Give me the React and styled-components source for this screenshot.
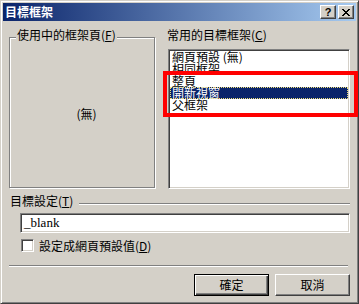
import React from 'react'
import styled, { createGlobalStyle } from 'styled-components'

const cjk = `"Noto Sans CJK TC", "Liberation Sans", sans-serif`

const GlobalStyle = createGlobalStyle`
  html, body {
    margin: 0;
    padding: 0;
    background: #d4d0c8;
  }
  * {
    box-sizing: border-box;
  }
`

const Window = styled.div`
  position: relative;
  width: 359px;
  height: 304px;
  padding: 2px;
  background: #d4d0c8;
  border: 1px solid;
  border-color: #d4d0c8 #404040 #404040 #d4d0c8;
  box-shadow: inset 1px 1px 0 #ffffff, inset -1px -1px 0 #808080;
  font-family: ${cjk};
  font-size: 12px;
  line-height: 12px;
  color: #000;
  display: flex;
  flex-direction: column;
`

const TitleBar = styled.div`
  height: 18px;
  display: flex;
  align-items: center;
  padding-left: 2px;
  padding-right: 2px;
  background: linear-gradient(to right, #0a246a, #a6caf0);
`

const Title = styled.span`
  color: #fff;
  font-weight: bold;
  font-size: 12px;
  line-height: 12px;
  letter-spacing: 0;
`

const CaptionButtons = styled.div`
  margin-left: auto;
  display: flex;
  gap: 2px;
`

const CaptionButton = styled.div`
  width: 16px;
  height: 14px;
  background: #d4d0c8;
  border: 1px solid;
  border-color: #ffffff #404040 #404040 #ffffff;
  box-shadow: inset -1px -1px 0 #808080;
  display: flex;
  align-items: center;
  justify-content: center;
  font-family: "Liberation Sans", sans-serif;
  font-weight: bold;
  font-size: 11px;
  line-height: 11px;
  color: #000;
`

const Body = styled.div`
  flex: 1;
  display: flex;
  flex-direction: column;
  padding: 8px 6px 0 6px;
`

const TopRow = styled.div`
  display: flex;
  gap: 12px;
  height: 160px;
`

const GroupBox = styled.div`
  position: relative;
  width: 146px;
  margin-top: 8px;
  height: 151px;
  border: 1px solid #808080;
  box-shadow: inset 1px 1px 0 #ffffff, 1px 1px 0 #ffffff;
  display: flex;
  align-items: center;
  justify-content: center;
  padding-left: 9px;
  padding-top: 2px;
`

const Legend = styled.span`
  position: absolute;
  top: -9px;
  left: 6px;
  padding: 0 1px;
  background: #d4d0c8;
  white-space: nowrap;
`

const Key = styled.span`
  text-decoration: underline;
`

const Column = styled.div`
  width: 183px;
  display: flex;
  flex-direction: column;
`

const Label = styled.div`
  height: 12px;
  white-space: nowrap;
`

const ListBox = styled.div`
  margin-top: 8px;
  margin-left: 1px;
  height: 140px;
  background: #fff;
  border: 1px solid;
  border-color: #808080 #ffffff #ffffff #808080;
  box-shadow: inset 1px 1px 0 #404040, inset -1px -1px 0 #d4d0c8;
  padding: 1px;
  display: flex;
  flex-direction: column;
`

const ListItem = styled.div`
  height: 12px;
  line-height: 12px;
  padding-left: 2px;
  white-space: nowrap;
  background: ${p => (p.$selected ? '#0a246a' : 'transparent')};
  color: ${p => (p.$selected ? '#fff' : '#000')};
  outline: ${p => (p.$selected ? '1px dotted #f0e07a' : 'none')};
  outline-offset: -1px;
`

const SectionRow = styled.div`
  margin-top: 6px;
  display: flex;
  align-items: center;
  height: 12px;
`

const SectionLabel = styled.span`
  margin-left: 1px;
  white-space: nowrap;
`

const EtchedLine = styled.div`
  flex: 1;
  height: 2px;
  margin-left: 6px;
  margin-top: 6px;
  border-top: 1px solid #808080;
  border-bottom: 1px solid #ffffff;
`

const TextBox = styled.div`
  margin-top: 6px;
  margin-left: 11px;
  height: 20px;
  background: #fff;
  border: 1px solid;
  border-color: #808080 #ffffff #ffffff #808080;
  box-shadow: inset 1px 1px 0 #404040, inset -1px -1px 0 #d4d0c8;
  padding: 1px 3px;
  display: flex;
  align-items: center;
  font-family: "Liberation Serif", serif;
  font-size: 13px;
`

const CheckRow = styled.div`
  margin-top: 6px;
  margin-left: 12px;
  display: flex;
  align-items: center;
  gap: 5px;
  height: 13px;
`

const CheckBox = styled.div`
  width: 13px;
  height: 13px;
  background: #fff;
  border: 1px solid;
  border-color: #808080 #ffffff #ffffff #808080;
  box-shadow: inset 1px 1px 0 #404040, inset -1px -1px 0 #d4d0c8;
`

const Separator = styled.div`
  margin-top: 13px;
  margin-right: 2px;
  height: 2px;
  border-top: 1px solid #808080;
  border-bottom: 1px solid #ffffff;
`

const ButtonRow = styled.div`
  margin-top: 7px;
  display: flex;
  justify-content: flex-end;
  gap: 6px;
`

const Button = styled.div`
  width: 75px;
  height: 22px;
  background: #d4d0c8;
  display: flex;
  align-items: center;
  justify-content: center;
  border: 1px solid;
  border-color: ${p => (p.$default ? '#000' : '#ffffff #404040 #404040 #ffffff')};
  box-shadow: ${p =>
    p.$default
      ? 'inset 1px 1px 0 #ffffff, inset -1px -1px 0 #404040, inset -2px -2px 0 #808080'
      : 'inset -1px -1px 0 #808080'};
`

const Highlight = styled.div`
  position: absolute;
  left: 162px;
  top: 70px;
  width: 195px;
  height: 46px;
  border: 4px solid #ff0000;
  pointer-events: none;
`

const CloseIcon = () => (
  <svg width="8" height="7" viewBox="0 0 8 7" shapeRendering="crispEdges">
    <path
      fill="#000"
      d="M0 0h2v1H0zM6 0h2v1H6zM1 1h2v1H1zM5 1h2v1H5zM2 2h4v1H2zM3 3h2v1H3zM2 4h4v1H2zM1 5h2v1H1zM5 5h2v1H5zM0 6h2v1H0zM6 6h2v1H6z"
    />
  </svg>
)

const frames = ['網頁預設 (無)', '相同框架', '整頁', '開新視窗', '父框架']

export default function App() {
  return (
    <>
      <GlobalStyle />
      <Window>
        <TitleBar>
          <Title>目標框架</Title>
          <CaptionButtons>
            <CaptionButton>?</CaptionButton>
            <CaptionButton>
              <CloseIcon />
            </CaptionButton>
          </CaptionButtons>
        </TitleBar>
        <Body>
          <TopRow>
            <GroupBox>
              <Legend>
                使用中的框架頁(<Key>F</Key>)
              </Legend>
              (無)
            </GroupBox>
            <Column>
              <Label>
                常用的目標框架(<Key>C</Key>)
              </Label>
              <ListBox>
                {frames.map(f => (
                  <ListItem key={f} $selected={f === '開新視窗'}>
                    {f}
                  </ListItem>
                ))}
              </ListBox>
            </Column>
          </TopRow>
          <SectionRow>
            <SectionLabel>
              目標設定(<Key>T</Key>)
            </SectionLabel>
            <EtchedLine />
          </SectionRow>
          <TextBox>_blank</TextBox>
          <CheckRow>
            <CheckBox />
            <span>
              設定成網頁預設值(<Key>D</Key>)
            </span>
          </CheckRow>
          <Separator />
          <ButtonRow>
            <Button $default>確定</Button>
            <Button>取消</Button>
          </ButtonRow>
        </Body>
        <Highlight />
      </Window>
    </>
  )
}
